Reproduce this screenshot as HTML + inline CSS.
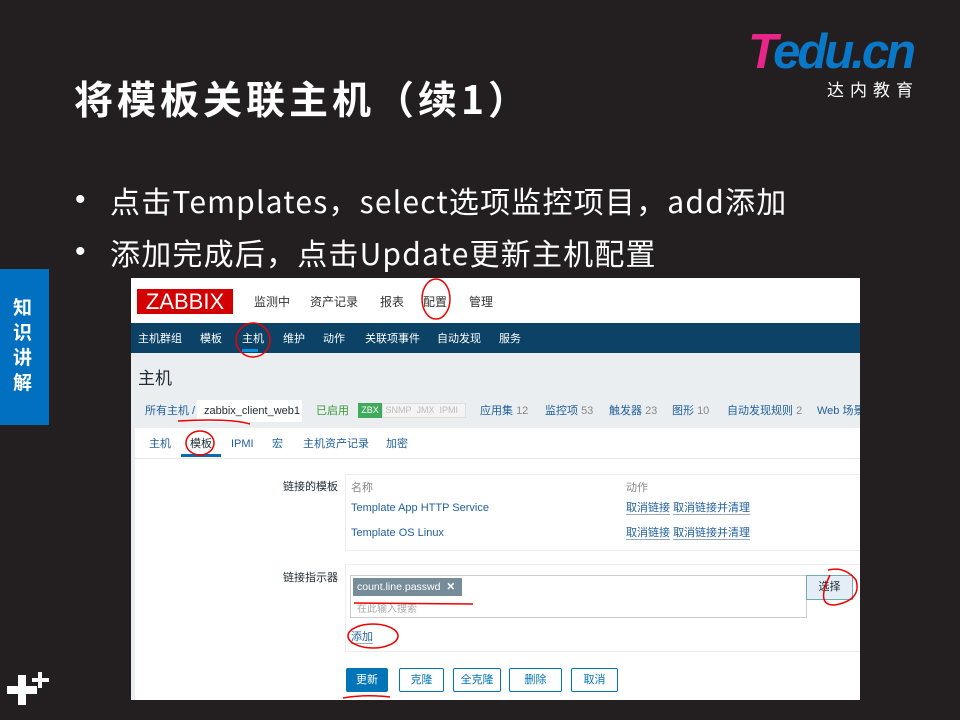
<!DOCTYPE html>
<html><head><meta charset="utf-8"><style>
*{margin:0;padding:0;box-sizing:border-box}
body{width:960px;height:720px;background:#231f20;position:relative;overflow:hidden;font-family:"Liberation Sans","Noto Sans CJK SC",sans-serif}
.a{position:absolute;white-space:nowrap}
.t{color:#fff}
.s{font-size:11px;color:#1f2c33;line-height:14px}
.l{color:#1f5f9c}
.u{border-bottom:1px solid #9ab;}
.btn{position:absolute;top:668px;height:24px;border:1px solid #0275b8;background:#fff;color:#0275b8;font-size:11px;text-align:center;line-height:22px;border-radius:2px}
.cj{font-family:"Noto Sans CJK SC",sans-serif}
</style></head><body>
<div class="a t cj" style="left:74px;top:70px;font-size:39px;font-weight:bold;line-height:56px;letter-spacing:4px">将模板关联主机（续1）</div>
<div class="a" style="left:748px;top:26px;font-size:49px;font-weight:bold;font-style:italic;letter-spacing:-3px;line-height:52px"><span style="color:#e8268a">T</span><span style="color:#0a78c8">edu.cn</span></div>
<div class="a t" style="left:827px;top:76px;font-size:17px;letter-spacing:6px">达内教育</div>
<div class="a t" style="left:75px;top:180px;font-size:30px;line-height:40px">•</div>
<div class="a t cj" style="left:110px;top:178px;font-size:30px;line-height:44px;letter-spacing:1.2px">点击Templates，select选项监控项目，add添加</div>
<div class="a t" style="left:75px;top:232px;font-size:30px;line-height:40px">•</div>
<div class="a t cj" style="left:110px;top:230px;font-size:30px;line-height:44px;letter-spacing:1.2px">添加完成后，点击Update更新主机配置</div>
<div class="a" style="left:0;top:269px;width:49px;height:156px;background:#0270c0"></div>
<div class="a t" style="left:13px;top:296px;font-size:19px;font-weight:bold;line-height:25px;width:24px;white-space:normal">知识讲解</div>
<div class="a" style="left:7px;top:686px;width:30px;height:8px;background:#fff"></div>
<div class="a" style="left:18px;top:675px;width:8px;height:30px;background:#fff"></div>
<div class="a" style="left:32px;top:678px;width:17px;height:4px;background:#fff"></div>
<div class="a" style="left:38px;top:672px;width:4px;height:16px;background:#fff"></div>

<div class="a" style="left:131px;top:278px;width:729px;height:422px;background:#fff"></div>
<div class="a" style="left:131px;top:323px;width:729px;height:30px;background:#0b4266"></div>
<div class="a" style="left:131px;top:353px;width:729px;height:347px;background:#ebeef0"></div>
<div class="a" style="left:135px;top:428px;width:725px;height:272px;background:#fff"></div>
<div class="a" style="left:135px;top:458px;width:725px;height:1px;background:#e6e6e6"></div>

<div class="a" style="left:137px;top:289px;width:96px;height:25px;background:#d40000;color:#fff;font-size:22px;line-height:25px;text-align:center">ZABBIX</div>
<div class="a" style="top:293px;font-size:12px;color:#333;left:254px">监测中</div>
<div class="a" style="top:293px;font-size:12px;color:#333;left:310px">资产记录</div>
<div class="a" style="top:293px;font-size:12px;color:#333;left:380px">报表</div>
<div class="a" style="top:293px;font-size:12px;color:#333;left:423px">配置</div>
<div class="a" style="top:293px;font-size:12px;color:#333;left:469px">管理</div>
<div class="a t s" style="left:138px;top:332px;color:#fff">主机群组</div>
<div class="a t s" style="left:200px;top:332px;color:#fff">模板</div>
<div class="a t s" style="left:242px;top:332px;color:#fff">主机</div>
<div class="a t s" style="left:283px;top:332px;color:#fff">维护</div>
<div class="a t s" style="left:323px;top:332px;color:#fff">动作</div>
<div class="a t s" style="left:365px;top:332px;color:#fff">关联项事件</div>
<div class="a t s" style="left:437px;top:332px;color:#fff">自动发现</div>
<div class="a t s" style="left:499px;top:332px;color:#fff">服务</div>
<div class="a" style="left:242px;top:349px;width:16px;height:3px;background:#0a8fe0"></div>
<div class="a" style="left:138px;top:364px;font-size:17px;color:#1f2c33">主机</div>

<div class="a s l" style="left:145px;top:404px">所有主机 /</div>
<div class="a s" style="left:197px;top:400px;width:105px;height:22px;background:#fff;padding:4px 7px">zabbix_client_web1</div>
<div class="a s" style="left:316px;top:404px;color:#3a9b3a">已启用</div>
<div class="a" style="left:358px;top:403px;width:24px;height:15px;background:#3dab5b;color:#fff;font-size:9px;line-height:15px;text-align:center">ZBX</div>
<div class="a" style="left:382px;top:403px;width:84px;height:15px;background:#f4f4f4;border:1px solid #ddd;color:#bbb;font-size:9px;line-height:13px">&nbsp;SNMP&nbsp;&nbsp;JMX&nbsp;&nbsp;IPMI</div>
<div class="a s l" style="left:480px;top:404px">应用集 <span style="color:#888">12</span></div>
<div class="a s l" style="left:545px;top:404px">监控项 <span style="color:#888">53</span></div>
<div class="a s l" style="left:609px;top:404px">触发器 <span style="color:#888">23</span></div>
<div class="a s l" style="left:672px;top:404px">图形 <span style="color:#888">10</span></div>
<div class="a s l" style="left:727px;top:404px">自动发现规则 <span style="color:#888">2</span></div>
<div class="a s l" style="left:817px;top:404px;width:43px;overflow:hidden">Web 场景</div>

<div class="a s l" style="left:149px;top:437px">主机</div>
<div class="a s" style="left:190px;top:437px">模板</div>
<div class="a s l" style="left:231px;top:437px">IPMI</div>
<div class="a s l" style="left:272px;top:437px">宏</div>
<div class="a s l" style="left:303px;top:437px">主机资产记录</div>
<div class="a s l" style="left:386px;top:437px">加密</div>
<div class="a" style="left:181px;top:454px;width:40px;height:3px;background:#0a6bb0"></div>

<div class="a s" style="left:283px;top:480px">链接的模板</div>
<div class="a" style="left:345px;top:474px;width:515px;height:77px;border:1px solid #eee;border-right:none"></div>
<div class="a s" style="left:351px;top:481px;color:#888">名称</div>
<div class="a s" style="left:626px;top:481px;color:#888">动作</div>
<div class="a s l" style="left:351px;top:501px">Template App HTTP Service</div>
<div class="a s l" style="left:626px;top:501px"><span class="u">取消链接</span> <span class="u">取消链接并清理</span></div>
<div class="a s l" style="left:351px;top:526px">Template OS Linux</div>
<div class="a s l" style="left:626px;top:526px"><span class="u">取消链接</span> <span class="u">取消链接并清理</span></div>

<div class="a s" style="left:283px;top:571px">链接指示器</div>
<div class="a" style="left:345px;top:564px;width:515px;height:88px;border:1px solid #eee;border-right:none"></div>
<div class="a" style="left:350px;top:575px;width:457px;height:43px;border:1px solid #ccc;background:#fff"></div>
<div class="a" style="left:353px;top:578px;width:109px;height:18px;background:#768d99;color:#fff;font-size:10.5px;line-height:18px;padding-left:4px">count.line.passwd&nbsp;&nbsp;<b>✕</b></div>
<div class="a" style="left:357px;top:600px;font-size:10px;color:#aaa">在此输入搜索</div>
<div class="a s" style="left:806px;top:575px;width:47px;height:25px;border:1px solid #7aa;background:#e4eef6;text-align:center;line-height:23px">选择</div>
<div class="a s l" style="left:351px;top:630px"><span class="u">添加</span></div>

<div class="btn" style="left:346px;width:42px;background:#0275b8;color:#fff">更新</div>
<div class="btn" style="left:399px;width:45px">克隆</div>
<div class="btn" style="left:453px;width:48px">全克隆</div>
<div class="btn" style="left:509px;width:53px">删除</div>
<div class="btn" style="left:571px;width:47px">取消</div>

<svg class="a" style="left:0;top:0" width="960" height="720" fill="none" stroke="#e00" stroke-width="1.5">
 <ellipse cx="436" cy="299" rx="14" ry="20"/>
 <ellipse cx="253" cy="340" rx="17" ry="17"/>
 <path d="M178 421 Q230 418 250 424"/>
 <ellipse cx="200" cy="443" rx="14" ry="12"/>
 <path d="M354 603 L473 604"/>
 <path d="M828 570 Q845 566 856 580 Q862 600 835 605 Q815 606 830 575"/>
 <ellipse cx="373" cy="636" rx="25" ry="12"/>
 <path d="M343 698 Q365 694 390 697"/>
</svg>
</body></html>
